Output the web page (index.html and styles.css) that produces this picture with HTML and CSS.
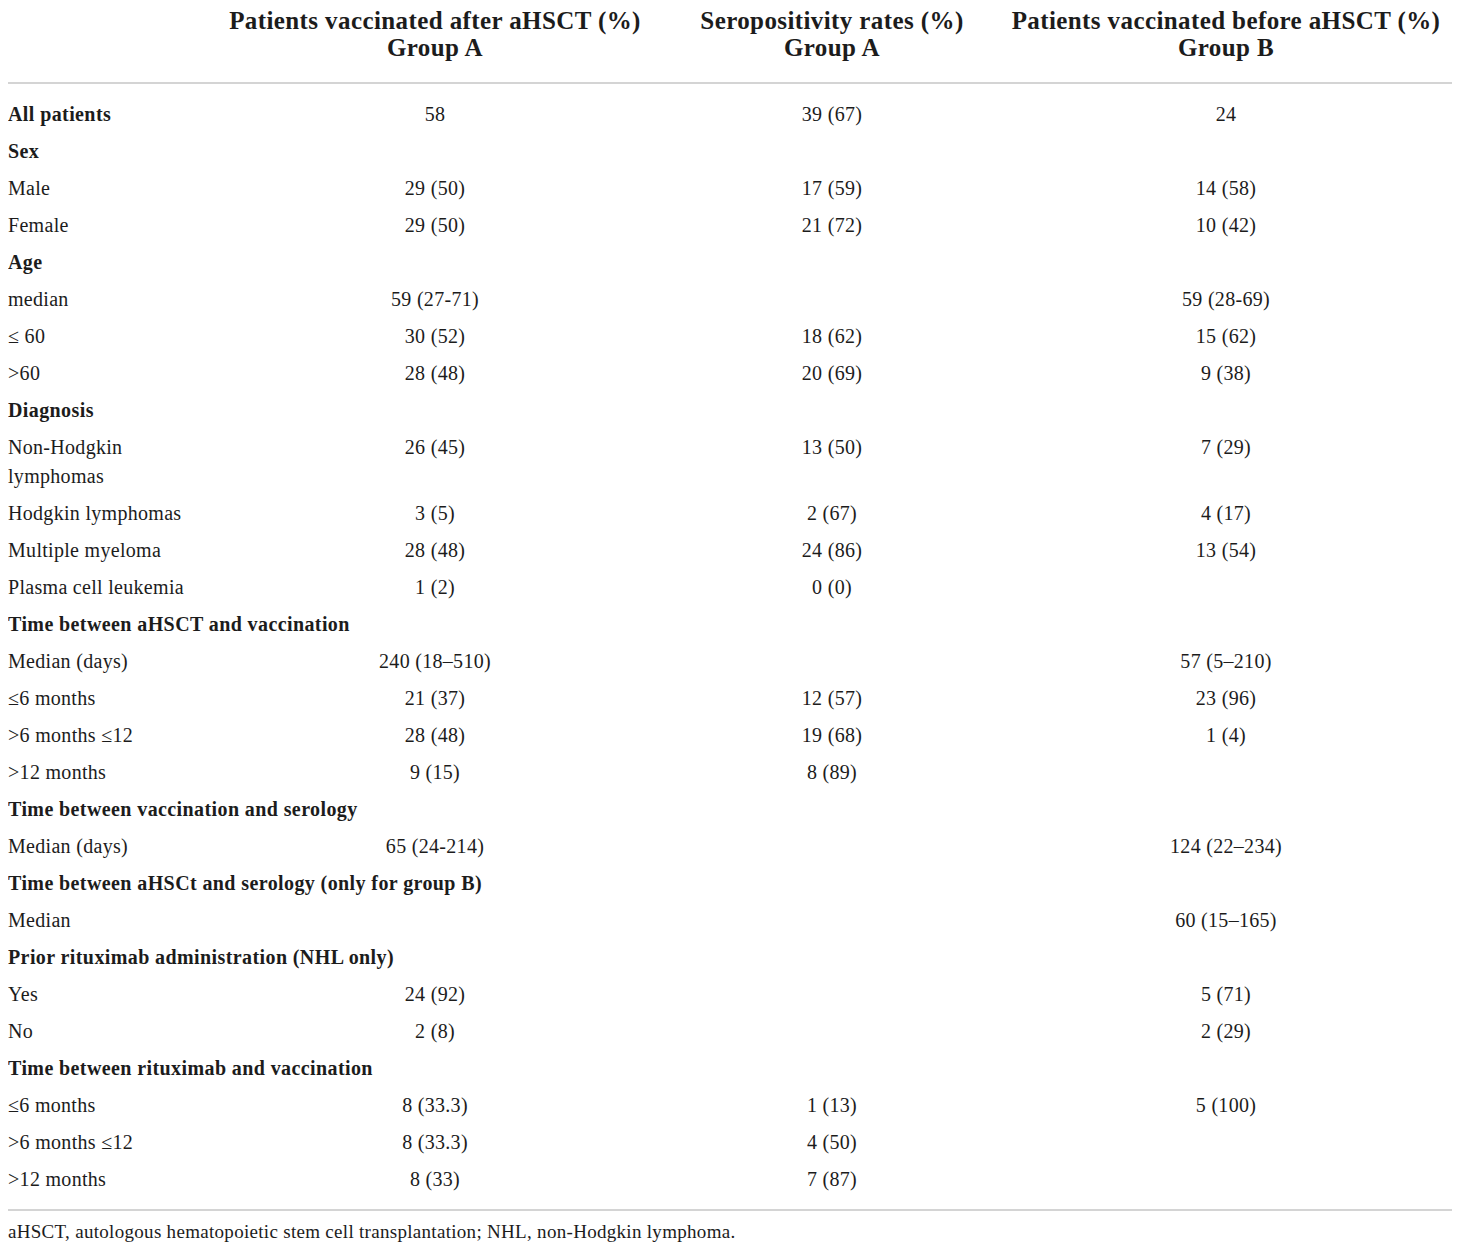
FILE: index.html
```html
<!DOCTYPE html>
<html lang="en">

    <head>
        <meta charset="UTF-8">
        <title>Patient characteristics</title>
        <link rel="stylesheet" href="styles.css">
    </head>

    <body>
        <table class="data">
            <colgroup>
                <col class="c-label">
                <col class="c-after">
                <col class="c-sero">
                <col class="c-before">
            </colgroup>
            <thead>
                <tr>
                    <th></th>
                    <th>Patients vaccinated after aHSCT (%)<br>Group A</th>
                    <th>Seropositivity rates (%)<br>Group A</th>
                    <th>Patients vaccinated before aHSCT (%)<br>Group B</th>
                </tr>
            </thead>
            <tbody>
                <tr class="first">
                    <td class="section">All patients</td>
                    <td>58</td>
                    <td>39 (67)</td>
                    <td>24</td>
                </tr>
                <tr><td class="section" colspan="4">Sex</td></tr>
                <tr><td>Male</td><td>29 (50)</td><td>17 (59)</td><td>14 (58)</td></tr>
                <tr><td>Female</td><td>29 (50)</td><td>21 (72)</td><td>10 (42)</td></tr>

                <tr><td class="section" colspan="4">Age</td></tr>
                <tr><td>median</td><td>59 (27-71)</td><td></td><td>59 (28-69)</td></tr>
                <tr><td>≤ 60</td><td>30 (52)</td><td>18 (62)</td><td>15 (62)</td></tr>
                <tr><td>&gt;60</td><td>28 (48)</td><td>20 (69)</td><td>9 (38)</td></tr>

                <tr><td class="section" colspan="4">Diagnosis</td></tr>
                <tr><td>Non-Hodgkin lymphomas</td><td>26 (45)</td><td>13 (50)</td><td>7 (29)</td></tr>
                <tr><td>Hodgkin lymphomas</td><td>3 (5)</td><td>2 (67)</td><td>4 (17)</td></tr>
                <tr><td>Multiple myeloma</td><td>28 (48)</td><td>24 (86)</td><td>13 (54)</td></tr>
                <tr><td>Plasma cell leukemia</td><td>1 (2)</td><td>0 (0)</td><td></td></tr>

                <tr><td class="section" colspan="4">Time between aHSCT and vaccination</td></tr>
                <tr><td>Median (days)</td><td>240 (18–510)</td><td></td><td>57 (5–210)</td></tr>
                <tr><td>≤6 months</td><td>21 (37)</td><td>12 (57)</td><td>23 (96)</td></tr>
                <tr><td>&gt;6 months ≤12</td><td>28 (48)</td><td>19 (68)</td><td>1 (4)</td></tr>
                <tr><td>&gt;12 months</td><td>9 (15)</td><td>8 (89)</td><td></td></tr>

                <tr><td class="section" colspan="4">Time between vaccination and serology</td></tr>
                <tr><td>Median (days)</td><td>65 (24-214)</td><td></td><td>124 (22–234)</td></tr>

                <tr><td class="section" colspan="4">Time between aHSCt and serology (only for group B)</td></tr>
                <tr><td>Median</td><td></td><td></td><td>60 (15–165)</td></tr>

                <tr><td class="section" colspan="4">Prior rituximab administration (NHL only)</td></tr>
                <tr><td>Yes</td><td>24 (92)</td><td></td><td>5 (71)</td></tr>
                <tr><td>No</td><td>2 (8)</td><td></td><td>2 (29)</td></tr>

                <tr><td class="section" colspan="4">Time between rituximab and vaccination</td></tr>
                <tr><td>≤6 months</td><td>8 (33.3)</td><td>1 (13)</td><td>5 (100)</td></tr>
                <tr><td>&gt;6 months ≤12</td><td>8 (33.3)</td><td>4 (50)</td><td></td></tr>
                <tr class="last"><td>&gt;12 months</td><td>8 (33)</td><td>7 (87)</td><td></td></tr>
            </tbody>
        </table>

        <p class="footnote">aHSCT, autologous hematopoietic stem cell transplantation; NHL, non-Hodgkin lymphoma.</p>
    </body>

</html>
```

FILE: styles.css
```css
body {
    margin: 0 8px;
    background: #fff;
    color: #1c1c1c;
    font-family: "Liberation Serif", "Times New Roman", serif;
}

.data {
    width: 1444px;
    border-collapse: collapse;
    table-layout: fixed;
}

.c-label {
    width: 198px;
}

.c-after {
    width: 458px;
}

.c-sero {
    width: 336px;
}

.c-before {
    width: 452px;
}

.data th {
    padding: 7px 0 21px;
    font-size: 25px;
    line-height: 27px;
    letter-spacing: 0.4px;
    font-weight: bold;
    text-align: center;
    border-bottom: 2px solid #d4d4d4;
}

.data td {
    padding: 4px 0;
    font-size: 20px;
    line-height: 29px;
    letter-spacing: 0.3px;
    text-align: center;
    vertical-align: top;
}

.data td:first-child {
    text-align: left;
    padding-right: 10px;
}

.data td.section {
    font-weight: bold;
    letter-spacing: 0.4px;
}

/* espaço extra abaixo do cabeçalho */
.data tr.first td {
    padding-top: 16px;
}

.data tr.last td {
    padding-bottom: 15px;
    border-bottom: 2px solid #d4d4d4;
}

.footnote {
    margin: 9px 0 0;
    font-size: 19px;
    line-height: 24px;
    letter-spacing: 0.3px;
}
```
